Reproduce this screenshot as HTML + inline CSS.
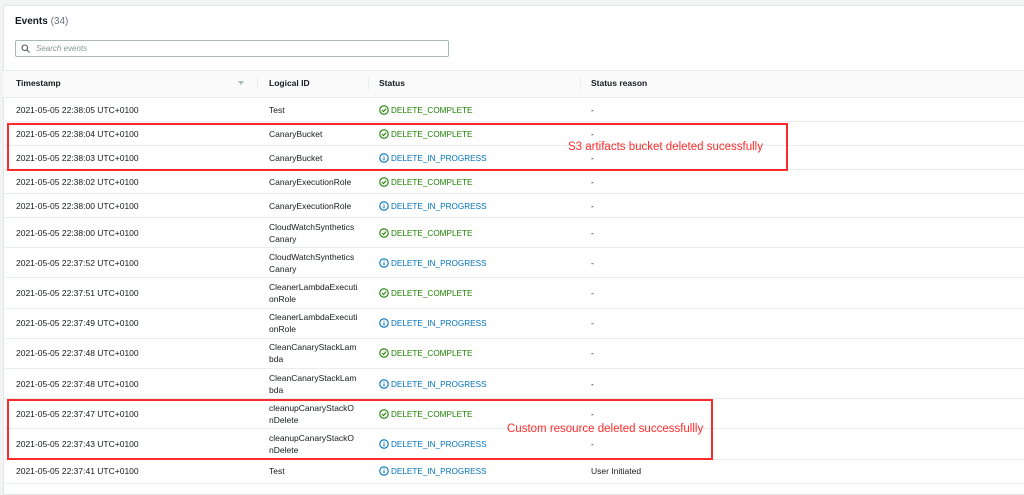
<!DOCTYPE html>
<html><head><meta charset="utf-8"><style>
*{margin:0;padding:0;box-sizing:border-box}
body{width:1024px;height:484px;overflow:hidden;background:#f2f3f3;font-family:"Liberation Sans",Arial,sans-serif;color:#16191f;position:relative}
.card{position:absolute;left:3px;top:5px;width:1030px;height:490px;background:#fff;border:1px solid #e4e6e6}
.a{position:absolute;white-space:nowrap}
.t{font-size:8.5px;line-height:12px}
.g{color:#1d8102}.b{color:#0073bb}
.line{position:absolute;left:3px;width:1021px;height:1px;background:#eaeded}
.red{position:absolute;border:2px solid #ff2b2b}
.rt{position:absolute;color:#ff2b2b;font-size:11.5px;white-space:nowrap}
svg{position:absolute}
</style></head><body>
<div class="card"></div>
<div class="a" style="left:15px;top:16px;font-size:10px;font-weight:bold">Events <span style="color:#687078;font-weight:normal">(34)</span></div>
<div class="a" style="left:15px;top:40px;width:434px;height:17px;border:1px solid #aab7b8;border-radius:2px;background:#fff"></div>
<svg style="left:21px;top:44px" width="9" height="9" viewBox="0 0 9 9"><circle cx="3.8" cy="3.8" r="2.8" fill="none" stroke="#545b64" stroke-width="1.1"/><path d="M6 6L8.5 8.5" stroke="#545b64" stroke-width="1.1"/></svg>
<div class="a t" style="left:36px;top:43px;color:#879596;font-style:italic;font-size:8px">Search events</div>
<div class="a" style="left:3px;top:70px;width:1021px;height:27px;background:#fafafa;border-top:1px solid #eaeded"></div>
<div class="a t" style="left:16px;top:77px;font-weight:bold">Timestamp</div>
<div class="a" style="left:238px;top:81px;width:0;height:0;border-left:3px solid transparent;border-right:3px solid transparent;border-top:4px solid #aab7b8"></div>
<div class="a" style="left:257px;top:77px;width:1px;height:13px;background:#eaeded"></div>
<div class="a t" style="left:269px;top:77px;font-weight:bold">Logical ID</div>
<div class="a" style="left:368px;top:77px;width:1px;height:13px;background:#eaeded"></div>
<div class="a t" style="left:379px;top:77px;font-weight:bold">Status</div>
<div class="a" style="left:580px;top:77px;width:1px;height:13px;background:#eaeded"></div>
<div class="a t" style="left:591px;top:77px;font-weight:bold">Status reason</div>
<div id="rows"></div>
<div class="red" style="left:7px;top:123px;width:781px;height:48px"></div>
<div class="rt" style="left:568px;top:141px">S3 artifacts bucket deleted sucessfully</div>
<div class="red" style="left:7px;top:399px;width:706px;height:61px"></div>
<div class="rt" style="left:507px;top:423px">Custom resource deleted successfullly</div>
<script>
var R=[
["2021-05-05 22:38:05 UTC+0100","Test",1,"-"],
["2021-05-05 22:38:04 UTC+0100","CanaryBucket",1,"-"],
["2021-05-05 22:38:03 UTC+0100","CanaryBucket",0,"-"],
["2021-05-05 22:38:02 UTC+0100","CanaryExecutionRole",1,"-"],
["2021-05-05 22:38:00 UTC+0100","CanaryExecutionRole",0,"-"],
["2021-05-05 22:38:00 UTC+0100","CloudWatchSynthetics<br>Canary",1,"-"],
["2021-05-05 22:37:52 UTC+0100","CloudWatchSynthetics<br>Canary",0,"-"],
["2021-05-05 22:37:51 UTC+0100","CleanerLambdaExecuti<br>onRole",1,"-"],
["2021-05-05 22:37:49 UTC+0100","CleanerLambdaExecuti<br>onRole",0,"-"],
["2021-05-05 22:37:48 UTC+0100","CleanCanaryStackLam<br>bda",1,"-"],
["2021-05-05 22:37:48 UTC+0100","CleanCanaryStackLam<br>bda",0,"-"],
["2021-05-05 22:37:47 UTC+0100","cleanupCanaryStackO<br>nDelete",1,"-"],
["2021-05-05 22:37:43 UTC+0100","cleanupCanaryStackO<br>nDelete",0,"-"],
["2021-05-05 22:37:41 UTC+0100","Test",0,"User Initiated"]];
var y=97,h="";
R.forEach(function(r){
 var two=r[1].indexOf("<br>")>=0, rh=two?30.2:24, c=y+rh/2+0.5;
 h+='<div class="line" style="top:'+y+'px"></div>';
 h+='<div class="a t" style="left:16px;top:'+(c-6)+'px">'+r[0]+'</div>';
 h+='<div class="a t" style="left:269px;top:'+(two?c-12:c-6)+'px">'+r[1]+'</div>';
 var col=r[2]?"#1d8102":"#0073bb";
 var ic=r[2]?'<path d="M2.8 4.6L4.1 5.9 6.4 3.2" fill="none" stroke="'+col+'" stroke-width="1"/>':'<path d="M4.5 4v2.6M4.5 2.4v.8" stroke="'+col+'" stroke-width="1"/>';
 h+='<svg style="left:379px;top:'+(c-5)+'px" width="10" height="10" viewBox="0 0 9 9"><circle cx="4.5" cy="4.5" r="3.8" fill="none" stroke="'+col+'" stroke-width="1"/>'+ic+'</svg>';
 h+='<div class="a t '+(r[2]?"g":"b")+'" style="left:391px;top:'+(c-5)+'px;font-size:8.2px">'+(r[2]?"DELETE_COMPLETE":"DELETE_IN_PROGRESS")+'</div>';
 h+='<div class="a t" style="left:591px;top:'+(c-6)+'px">'+r[3]+'</div>';
 y+=rh;
});
h+='<div class="line" style="top:'+y+'px"></div>';
document.getElementById("rows").innerHTML=h;
</script>
</body></html>
